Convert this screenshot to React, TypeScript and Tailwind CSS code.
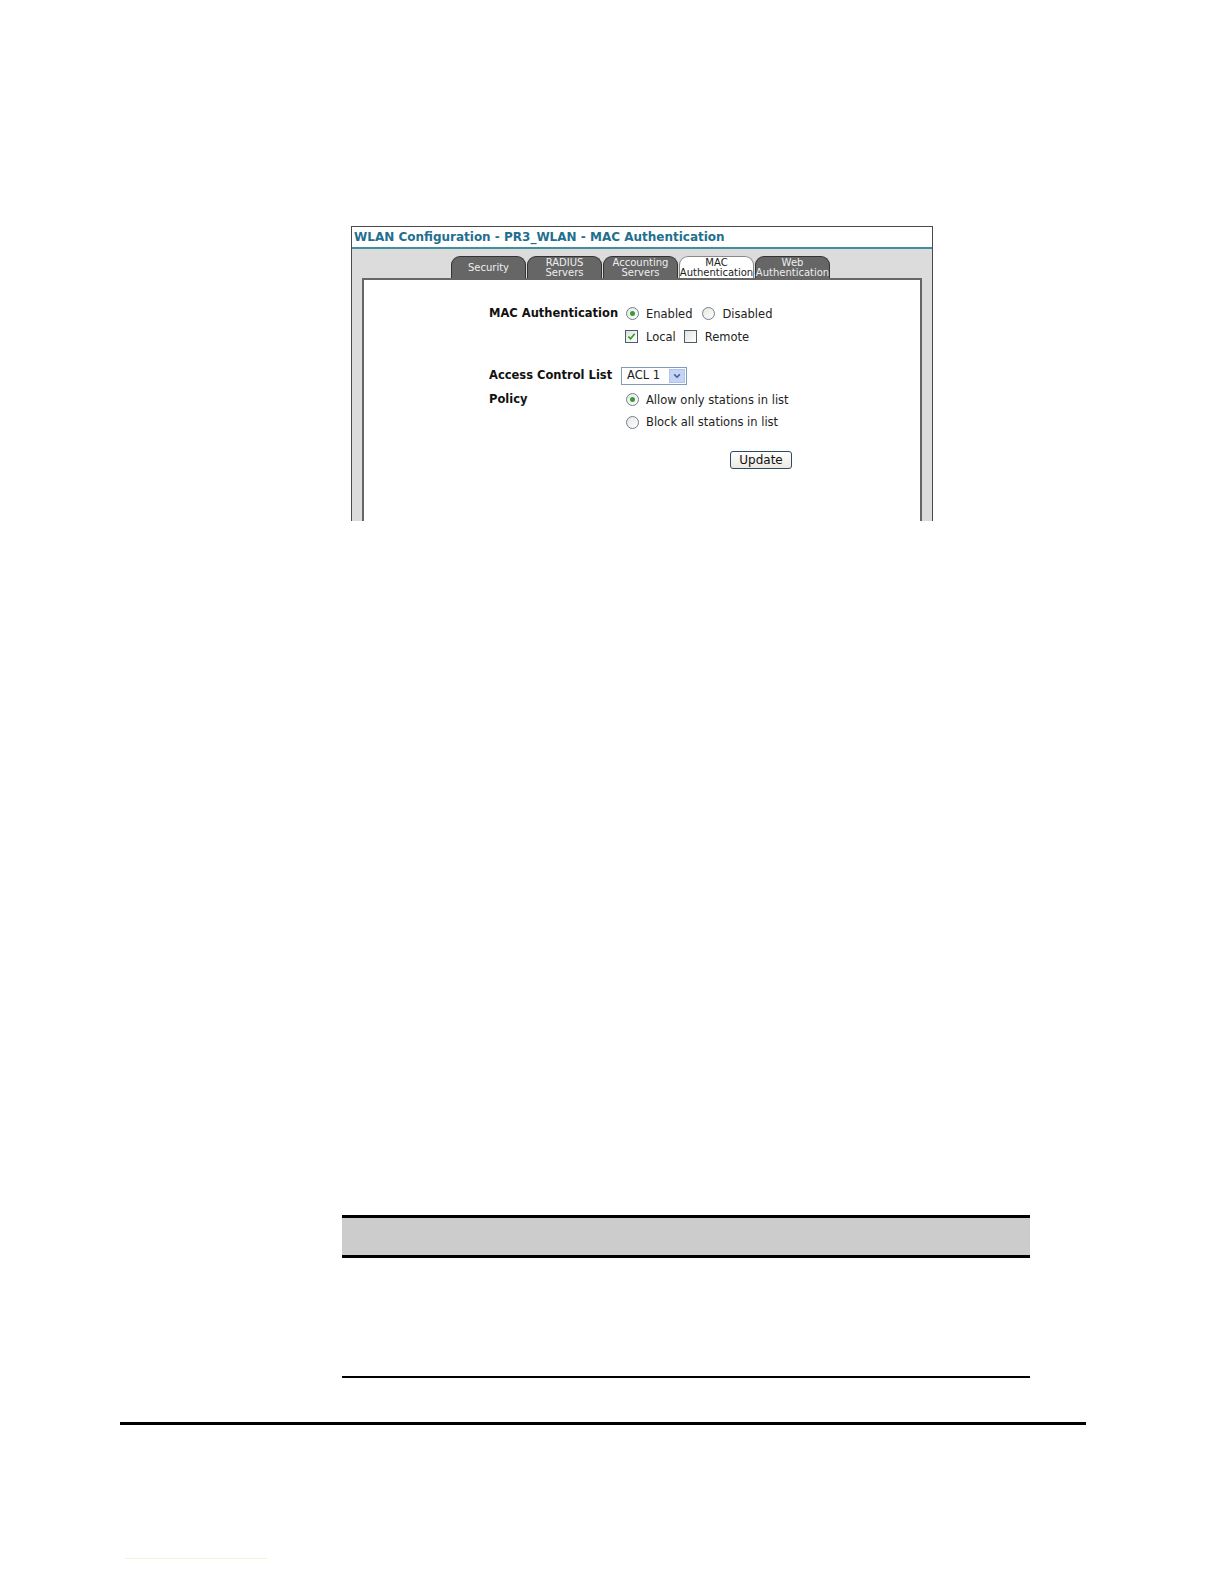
import React from "react";

const font = { fontFamily: '"DejaVu Sans", Verdana, sans-serif' };

const tabs = [
  { id: "security", lines: ["Security"] },
  { id: "radius", lines: ["RADIUS", "Servers"] },
  { id: "accounting", lines: ["Accounting", "Servers"] },
  { id: "mac", lines: ["MAC", "Authentication"], active: true },
  { id: "web", lines: ["Web", "Authentication"] },
];

function Radio({ checked }: { checked?: boolean }) {
  return (
    <span className="flex items-center justify-center w-[13px] h-[13px] rounded-full border border-[#6f7f8f] bg-gradient-to-br from-[#e6e6e0] to-white shrink-0">
      {checked && <span className="w-[5px] h-[5px] rounded-full bg-[#3a9a3a]" />}
    </span>
  );
}

function Check({ checked }: { checked?: boolean }) {
  return (
    <span className="flex items-center justify-center w-[13px] h-[13px] border border-[#4c5c6c] bg-gradient-to-br from-[#e2e2dc] to-white shrink-0">
      {checked && (
        <svg viewBox="0 0 10 10" className="w-[9px] h-[9px]">
          <path d="M1.5 5 L4 7.5 L8.5 2" fill="none" stroke="#2f9a2f" strokeWidth="1.8" />
        </svg>
      )}
    </span>
  );
}

export default function App() {
  return (
    <div className="relative w-[1224px] h-[1584px] bg-white overflow-hidden" style={font}>
      <div className="pt-[226px] pl-[351px]">
        {/* screenshot of the WLAN config page */}
        <div className="w-[582px] h-[295px] border-t border-x border-[#4a4a4a] flex flex-col">
          <div className="h-[20px] bg-white px-[2px] flex items-center text-[12px] font-bold text-[#1f6f8f] whitespace-nowrap">
            WLAN Configuration - PR3_WLAN - MAC Authentication
          </div>
          <div className="h-[2px] bg-[#3f8f9c]" />
          <div className="flex-1 bg-[#dcdcdc] px-[10px] pt-[7px] flex flex-col">
            <div className="h-[22px] flex items-end pl-[89px] gap-[1px]">
              {tabs.map((t) => (
                <div
                  key={t.id}
                  className={`w-[75px] h-[22px] rounded-t-[9px] flex flex-col items-center justify-center text-[10px] leading-[10px] whitespace-nowrap ${
                    t.active
                      ? "bg-white text-[#222] border border-b-0 border-[#888]"
                      : "bg-[#666] text-[#eee] border border-b-0 border-[#333]"
                  }`}
                >
                  {t.lines.map((l) => (
                    <span key={l}>{l}</span>
                  ))}
                </div>
              ))}
            </div>
            <div className="flex-1 bg-white border-2 border-b-0 border-[#666] pl-[125px] pt-[24px] text-[11.5px] text-[#222]">
              <div className="flex">
                <div className="w-[132px] font-bold text-[11.5px] text-[#111] leading-[18px] whitespace-nowrap">MAC Authentication</div>
                <div className="flex flex-col">
                  <div className="h-[18px] flex items-center pl-[5px]">
                    <Radio checked />
                    <span className="ml-[7px] mt-[3px]">Enabled</span>
                    <span className="ml-[10px]">
                      <Radio />
                    </span>
                    <span className="ml-[7px] mt-[3px]">Disabled</span>
                  </div>
                  <div className="h-[18px] mt-[5px] flex items-center pl-[4px]">
                    <Check checked />
                    <span className="ml-[8px] mt-[3px]">Local</span>
                    <span className="ml-[8px]">
                      <Check />
                    </span>
                    <span className="ml-[8px] mt-[3px]">Remote</span>
                  </div>
                </div>
              </div>

              <div className="flex mt-[22px] items-center h-[18px]">
                <div className="w-[132px] font-bold text-[11.5px] text-[#111] whitespace-nowrap">Access Control List</div>
                <div className="w-[66px] h-[18px] border border-[#7f9db9] flex items-center justify-between pl-[5px] pr-[1px] bg-white">
                  <span>ACL 1</span>
                  <span className="w-[16px] h-[14px] bg-[#c4d4f8] border border-[#b0c4ee] flex items-center justify-center">
                    <svg viewBox="0 0 10 10" className="w-[8px] h-[8px]">
                      <path d="M1.5 3 L5 6.5 L8.5 3" fill="none" stroke="#4d6185" strokeWidth="2" />
                    </svg>
                  </span>
                </div>
              </div>

              <div className="flex mt-[5px]">
                <div className="w-[132px] font-bold text-[11.5px] text-[#111] leading-[18px]">Policy</div>
                <div className="flex flex-col">
                  <div className="h-[18px] flex items-center pl-[5px]">
                    <Radio checked />
                    <span className="ml-[7px] mt-[3px]">Allow only stations in list</span>
                  </div>
                  <div className="h-[18px] mt-[5px] flex items-center pl-[5px]">
                    <Radio />
                    <span className="ml-[7px] mt-[2px]">Block all stations in list</span>
                  </div>
                </div>
              </div>

              <div className="mt-[20px] pl-[241px]">
                <button className="w-[62px] h-[18px] rounded-[3px] border border-[#2c4a6a] bg-gradient-to-b from-white to-[#ebe9e0] text-[12px] leading-[15px] text-[#111]">
                  Update
                </button>
              </div>
            </div>
          </div>
        </div>
      </div>

      {/* table frame below the figure */}
      <div className="mt-[694px] ml-[342px] w-[688px]">
        <div className="h-[43px] bg-[#cccccc] border-y-[3px] border-black" />
        <div className="h-[118px]" />
        <div className="h-[2px] bg-black" />
      </div>

      {/* page footer rule */}
      <div className="mt-[44px] ml-[120px] w-[966px] h-[3px] bg-black" />
      <div className="mt-[133px] ml-[125px] w-[142px] h-[1px] bg-[#f6f2d6]" />
    </div>
  );
}
